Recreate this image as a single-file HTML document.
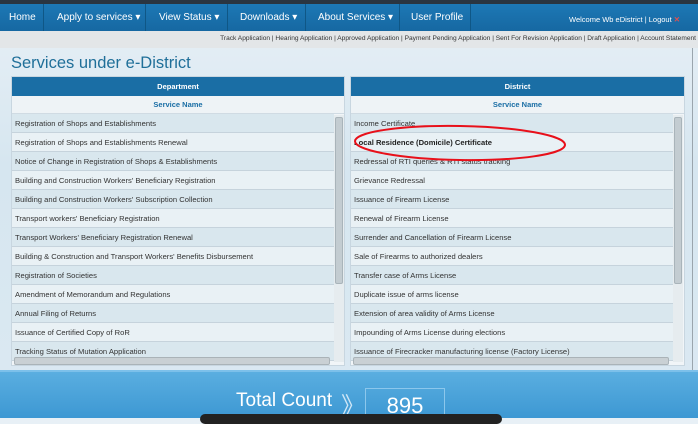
<!DOCTYPE html>
<html><head><meta charset="utf-8"><style>
*{margin:0;padding:0;box-sizing:border-box}
body{width:698px;height:418px;overflow:hidden;position:relative;font-family:"Liberation Sans",sans-serif;background:linear-gradient(180deg,#e8f0f6 0%,#d6e6f0 40%,#dbe9f2 100%)}
.top{position:absolute;left:0;top:0;width:698px;height:4px;background:#2a3540}
.nav{position:absolute;left:0;top:4px;width:698px;height:27px;background:linear-gradient(#1d78b5,#1668a2);color:#fff;font-size:10px}
.nav span{position:absolute;top:8px}
.sep{position:absolute;top:0;width:1px;height:27px;background:#0f5786}
.sub{position:absolute;left:0;top:31px;width:698px;height:17px;background:#e3e6e8;font-size:6.6px;color:#333;text-align:right;padding:4px 2px 0 0;white-space:nowrap}
h1{position:absolute;left:11px;top:54px;font-weight:normal;font-size:16.5px;color:#1f6f99}
.tbl{position:absolute;top:76px;height:290px;background:#f1f5f8;border:1px solid #c8d6e0}
.hd{height:19px;background:#1a6ea5;color:#fff;font-weight:bold;font-size:7.5px;text-align:center;line-height:19px}
.sh{height:18px;background:#eef3f6;color:#1a6ea5;font-weight:bold;font-size:7.5px;text-align:center;line-height:18px;border-bottom:1px solid #d0dbe3}
.row{height:19px;border-bottom:1px solid #c6d3dc;font-size:7.6px;color:#333;line-height:19px;padding-left:3px;white-space:nowrap;overflow:hidden}
.row:nth-child(odd){background:rgba(196,218,230,.55)}
.row:nth-child(even){background:rgba(225,236,243,.55)}
.vs{position:absolute;top:38px;width:10px;height:247px;background:#e6ecef}
.vs i{position:absolute;left:1px;top:2px;width:8px;height:167px;background:#c3ccd1;border:1px solid #a9b4ba;border-radius:2px}
.hs{position:absolute;left:2px;top:280px;height:8px;background:#c9d0d4;border:1px solid #aab3b8;border-radius:2px}
.bot{position:absolute;left:0;top:370px;width:698px;height:48px;background:linear-gradient(#5aaee0,#3d98d3);border-top:2px solid #7cc0ea}
.tc{position:absolute;left:236px;top:390px;color:#fff;font-size:19px}
.arr{position:absolute;left:341px;top:386px;color:#cfe6f6;font-size:24px}
.box{position:absolute;left:365px;top:388px;width:80px;height:32px;border:1px solid #8cc7ec;color:#fff;font-size:22px;text-align:center;padding-top:4px}
.bar{position:absolute;left:200px;top:414px;width:302px;height:10px;background:#222;border-radius:6px}
</style></head><body>
<div class="top"></div>
<div class="nav">
<span style="left:9px">Home</span><div class="sep" style="left:43px"></div>
<span style="left:57px">Apply to services ▾</span><div class="sep" style="left:145px"></div>
<span style="left:159px">View Status ▾</span><div class="sep" style="left:227px"></div>
<span style="left:240px">Downloads ▾</span><div class="sep" style="left:305px"></div>
<span style="left:318px">About Services ▾</span><div class="sep" style="left:399px"></div>
<span style="left:411px">User Profile</span><div class="sep" style="left:470px"></div>
<span style="left:569px;top:11px;font-size:7.5px">Welcome Wb eDistrict | Logout <b style="color:#e05050">✕</b></span>
</div>
<div class="sub">Track Application | Hearing Application | Approved Application | Payment Pending Application | Sent For Revision Application | Draft Application | Account Statement</div>
<h1>Services under e-District</h1>
<div class="tbl" style="left:11px;width:334px">
<div class="hd">Department</div><div class="sh">Service Name</div>
<div style="width:322px">
<div class="row">Registration of Shops and Establishments</div>
<div class="row">Registration of Shops and Establishments Renewal</div>
<div class="row">Notice of Change in Registration of Shops &amp; Establishments</div>
<div class="row">Building and Construction Workers' Beneficiary Registration</div>
<div class="row">Building and Construction Workers' Subscription Collection</div>
<div class="row">Transport workers' Beneficiary Registration</div>
<div class="row">Transport Workers' Beneficiary Registration Renewal</div>
<div class="row">Building &amp; Construction and Transport Workers' Benefits Disbursement</div>
<div class="row">Registration of Societies</div>
<div class="row">Amendment of Memorandum and Regulations</div>
<div class="row">Annual Filing of Returns</div>
<div class="row">Issuance of Certified Copy of RoR</div>
<div class="row">Tracking Status of Mutation Application</div>
</div>
<div class="vs" style="left:322px"><i></i></div>
<div class="hs" style="width:316px"></div>
</div>
<div class="tbl" style="left:350px;width:335px">
<div class="hd">District</div><div class="sh">Service Name</div>
<div style="width:322px">
<div class="row">Income Certificate</div>
<div class="row" style="font-weight:bold;color:#222">Local Residence (Domicile) Certificate</div>
<div class="row">Redressal of RTI queries &amp; RTI status tracking</div>
<div class="row">Grievance Redressal</div>
<div class="row">Issuance of Firearm License</div>
<div class="row">Renewal of Firearm License</div>
<div class="row">Surrender and Cancellation of Firearm License</div>
<div class="row">Sale of Firearms to authorized dealers</div>
<div class="row">Transfer case of Arms License</div>
<div class="row">Duplicate issue of arms license</div>
<div class="row">Extension of area validity of Arms License</div>
<div class="row">Impounding of Arms License during elections</div>
<div class="row">Issuance of Firecracker manufacturing license (Factory License)</div>
</div>
<div class="vs" style="left:322px"><i></i></div>
<div class="hs" style="width:316px"></div>
</div>
<div style="position:absolute;left:692px;top:48px;width:1px;height:322px;background:#9aa5ad"></div>
<svg style="position:absolute;left:0;top:0" width="698" height="418"><ellipse cx="460" cy="143" rx="105" ry="17" fill="none" stroke="#e8101a" stroke-width="2" transform="rotate(1 460 143)"/></svg>
<div class="bot"></div>
<div class="tc">Total Count</div>
<div class="arr">》</div>
<div class="box">895</div>
<div class="bar"></div>
</body></html>
